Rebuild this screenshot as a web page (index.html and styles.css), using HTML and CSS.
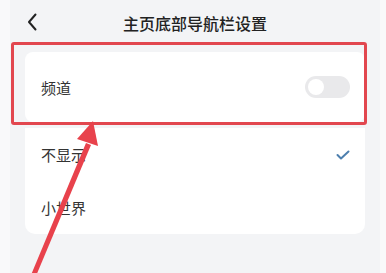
FILE: index.html
```html
<!DOCTYPE html>
<html lang="zh">
<head>
<meta charset="utf-8">
<link rel="stylesheet" href="styles.css">
</head>
<body>
<div class="screen">
  <div class="page">
    <header class="header">
      <svg class="back" width="12" height="20" viewBox="0 0 12 20"><path d="M9.5 2.5 L3 10 L9.5 17.5" fill="none" stroke="#222" stroke-width="2" stroke-linecap="round" stroke-linejoin="round"/></svg>
      <div class="title">主页底部导航栏设置</div>
    </header>
    <div class="card card-top">
      <div class="row row-tall">
        <span class="label">频道</span>
        <span class="toggle"><span class="knob"></span></span>
      </div>
    </div>
    <div class="card card-list">
      <div class="row">
        <span class="label">不显示</span>
        <svg class="check" width="14" height="10" viewBox="0 0 14 10"><path d="M1.5 5 L5 8.5 L12.5 1.5" fill="none" stroke="#4d7fae" stroke-width="2" stroke-linecap="round" stroke-linejoin="round"/></svg>
      </div>
      <div class="row">
        <span class="label">小世界</span>
      </div>
    </div>
  </div>
  <div class="highlight"></div>
  <svg class="arrow" width="386" height="273" viewBox="0 0 386 273">
    <path d="M31 275 L86 143 L91 145 L36 276 Z" fill="#e8424c"/>
    <path d="M93 121 L77 139 L98 146 Z" fill="#e8424c"/>
  </svg>
</div>
</body>
</html>
```
FILE: styles.css
```css
html, body {
  margin: 0;
  padding: 0;
}
body {
  width: 386px;
  height: 273px;
  overflow: hidden;
  background: #f9f9fa;
  font-family: "Noto Sans CJK SC", "Noto Sans", sans-serif;
}
.screen {
  position: relative;
  width: 386px;
  height: 273px;
  display: flex;
  padding-left: 10px;
  padding-right: 6px;
  box-sizing: border-box;
}
.page {
  flex: 1;
  background: #f3f4f6;
  display: flex;
  flex-direction: column;
  padding: 0 15px;
}
.header {
  height: 46px;
  display: flex;
  align-items: center;
  justify-content: center;
  position: relative;
}
.back {
  position: absolute;
  left: 1px;
  top: 12px;
}
.title {
  font-size: 16px;
  font-weight: 500;
  color: #222;
}
.card {
  background: #fff;
  border-radius: 8px;
}
.card-top {
  margin-top: 6px;
}
.card-list {
  margin-top: 6px;
  border-radius: 0 0 10px 10px;
}
.row {
  height: 53px;
  display: flex;
  align-items: center;
  justify-content: space-between;
  padding: 0 15px 0 16px;
}
.row-tall {
  height: 70px;
}
.label {
  font-size: 15px;
  color: #333;
}
.toggle {
  width: 45px;
  height: 22px;
  border-radius: 11px;
  background: #e9e9eb;
  position: relative;
}
.knob {
  position: absolute;
  left: 3px;
  top: 3px;
  width: 16px;
  height: 16px;
  border-radius: 50%;
  background: #fff;
}
.highlight {
  position: absolute;
  left: 11px;
  top: 42px;
  width: 350px;
  height: 77px;
  border: 3px solid #e2474f;
  border-radius: 3px;
}
.arrow {
  position: absolute;
  left: 0;
  top: 0;
}
```
